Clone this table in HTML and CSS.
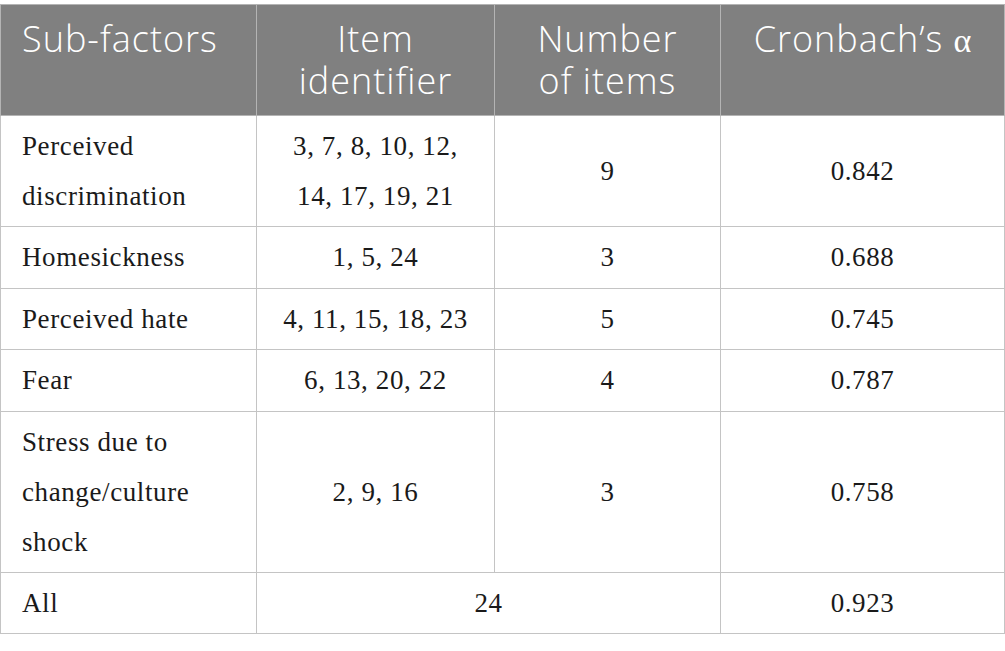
FILE: index.html
```html
<!DOCTYPE html>
<html>
<head>
<meta charset="utf-8">
<link rel="stylesheet" href="styles.css">
</head>
<body>
<table class="data">
  <colgroup>
    <col class="c1"><col class="c2"><col class="c3"><col class="c4">
  </colgroup>
  <thead>
    <tr>
      <th class="left">Sub-factors</th>
      <th>Item<br>identifier</th>
      <th>Number<br>of items</th>
      <th>Cronbach’s <span class="alpha">α</span></th>
    </tr>
  </thead>
  <tbody>
    <tr>
      <td class="left">Perceived<br>discrimination</td>
      <td>3, 7, 8, 10, 12,<br>14, 17, 19, 21</td>
      <td>9</td>
      <td>0.842</td>
    </tr>
    <tr>
      <td class="left">Homesickness</td>
      <td>1, 5, 24</td>
      <td>3</td>
      <td>0.688</td>
    </tr>
    <tr>
      <td class="left">Perceived hate</td>
      <td>4, 11, 15, 18, 23</td>
      <td>5</td>
      <td>0.745</td>
    </tr>
    <tr>
      <td class="left">Fear</td>
      <td>6, 13, 20, 22</td>
      <td>4</td>
      <td>0.787</td>
    </tr>
    <tr>
      <td class="left">Stress due to<br>change/culture<br>shock</td>
      <td>2, 9, 16</td>
      <td>3</td>
      <td>0.758</td>
    </tr>
    <tr>
      <td class="left">All</td>
      <td colspan="2">24</td>
      <td>0.923</td>
    </tr>
  </tbody>
</table>
</body>
</html>
```
FILE: styles.css
```css
html, body {
  margin: 0;
  padding: 0;
  background: #ffffff;
}
body {
  padding-top: 4px;
}
.data {
  border-collapse: collapse;
  width: 1004px;
  table-layout: fixed;
}
.c1 { width: 256px; }
.c2 { width: 238px; }
.c3 { width: 226px; }
.c4 { width: 284px; }
.data th {
  background: #808080;
  color: #ffffff;
  font-family: "Open Sans", "Noto Sans", sans-serif;
  font-weight: 350;
  font-size: 36px;
  letter-spacing: 1px;
  line-height: 42px;
  padding: 13px 8px 13px;
  text-align: center;
  vertical-align: top;
  border: 1px solid #b4b4b4;
}
.data th.left {
  text-align: left;
  padding-left: 21px;
}
.alpha {
  font-family: "Liberation Serif", "DejaVu Serif", serif;
  font-weight: 400;
  font-size: 34px;
  letter-spacing: 0;
}
.data td {
  font-family: "Liberation Serif", "DejaVu Serif", serif;
  font-size: 27px;
  letter-spacing: 0.6px;
  line-height: 50px;
  color: #1a1a1a;
  padding: 5px 10px 5.4px;
  text-align: center;
  vertical-align: middle;
  border: 1px solid #c4c4c4;
}
.data td.left {
  text-align: left;
  padding-left: 21px;
}
```
